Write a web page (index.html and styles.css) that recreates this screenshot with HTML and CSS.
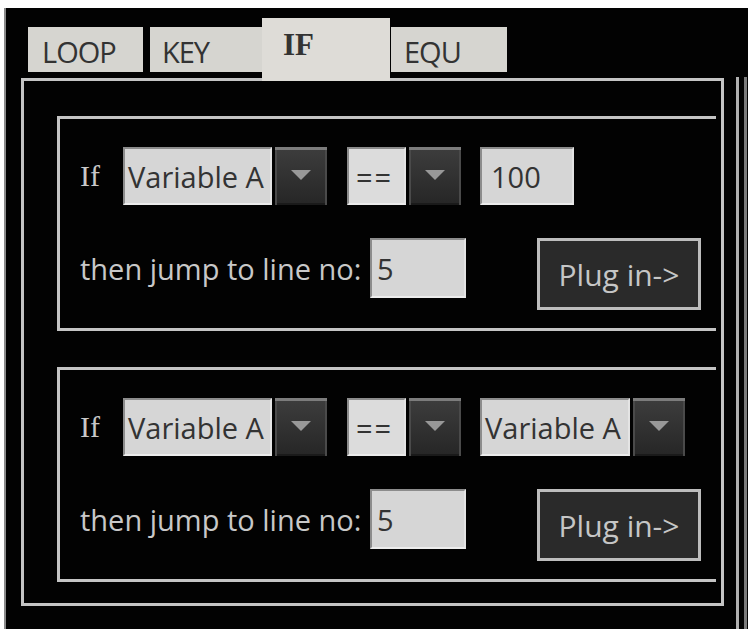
FILE: index.html
```html
<!DOCTYPE html>
<html>
<head>
<meta charset="utf-8">
<title>IF</title>
<link rel="stylesheet" href="styles.css">
</head>
<body>
<div class="window">
  <div class="main">
    <div class="tabs">
      <div class="tab tab-loop">LOOP</div>
      <div class="tab tab-key">KEY</div>
      <div class="tab tab-active">IF</div>
      <div class="tab tab-equ">EQU</div>
    </div>
    <div class="frame">
      <div class="group">
        <div class="row-cond">
          <span class="if">If</span>
          <div class="combo">
            <span class="field f-var">Variable A</span>
            <span class="drop"><span class="tri"></span></span>
          </div>
          <div class="combo combo-op">
            <span class="field f-op">==</span>
            <span class="drop"><span class="tri"></span></span>
          </div>
          <span class="field f-num">100</span>
        </div>
        <div class="row-jump">
          <span class="label">then jump to line no:</span>
          <span class="field f-line">5</span>
          <button class="plug">Plug in-&gt;</button>
        </div>
      </div>
      <div class="group">
        <div class="row-cond">
          <span class="if">If</span>
          <div class="combo">
            <span class="field f-var">Variable A</span>
            <span class="drop"><span class="tri"></span></span>
          </div>
          <div class="combo combo-op">
            <span class="field f-op">==</span>
            <span class="drop"><span class="tri"></span></span>
          </div>
          <div class="combo combo-rhs">
            <span class="field f-var">Variable A</span>
            <span class="drop"><span class="tri"></span></span>
          </div>
        </div>
        <div class="row-jump">
          <span class="label">then jump to line no:</span>
          <span class="field f-line">5</span>
          <button class="plug">Plug in-&gt;</button>
        </div>
      </div>
    </div>
  </div>
  <div class="side"></div>
</div>
</body>
</html>
```

FILE: styles.css
```css
html, body {
  margin: 0;
  padding: 0;
  background: #ffffff;
}

body {
  width: 748px;
  height: 629px;
  overflow: hidden;
  font-family: "Open Sans", "Liberation Sans", sans-serif;
}

.window {
  margin: 8px 0 0 4px;
  height: 621px;
  background: #020202;
  border-left: 2px solid #8a8a8a;
  display: flex;
  box-sizing: border-box;
}

.main {
  margin-left: 15px;
  width: 703px;
  flex: none;
}

/* ---------- tabs ---------- */
.tabs {
  display: flex;
  align-items: flex-start;
  height: 70px;
  padding-left: 7px;
}

.tab {
  margin-top: 19px;
  height: 45px;
  box-sizing: border-box;
  background: #d6d5d0;
  color: #333333;
  font-size: 29px;
  line-height: 32px;
  padding-top: 9px;
  letter-spacing: -1px;
}

.tab-loop {
  width: 115px;
  padding-left: 14px;
  margin-right: 7px;
}

.tab-key {
  width: 112px;
  padding-left: 12px;
}

.tab-active {
  position: relative;
  z-index: 1;
  margin-top: 10px;
  height: 63px;
  width: 128px;
  padding-left: 21px;
  padding-top: 11px;
  background: #dedcd7;
  font-family: "Liberation Serif", serif;
  font-size: 31px;
  font-weight: bold;
  letter-spacing: 0;
  color: #333;
}

.tab-equ {
  margin-left: 1px;
  width: 116px;
  padding-left: 13px;
}

/* ---------- frame ---------- */
.frame {
  height: 528px;
  box-sizing: border-box;
  border: 3px solid #c4c4c4;
  padding: 35px 0 0 33px;
}

.group {
  width: 659px;
  height: 215px;
  box-sizing: border-box;
  border: 3px solid #c4c4c4;
  border-right: none;
  padding: 28px 0 0 20px;
}

.group + .group {
  margin-top: 36px;
}

.row-cond {
  display: flex;
  align-items: center;
  height: 58px;
}

.if {
  width: 43px;
  flex: none;
  font-family: "Liberation Serif", serif;
  font-size: 30px;
  color: #c8c8c8;
}

.combo {
  display: flex;
  gap: 3px;
  height: 58px;
}

.combo-op {
  margin-left: 20px;
}

.combo-rhs {
  margin-left: 19px;
}

.field {
  display: flex;
  align-items: center;
  box-sizing: border-box;
  height: 58px;
  background: #d6d6d6;
  color: #333;
  font-size: 29px;
  border-top: 2px solid #8c8c8c;
  border-left: 2px solid #8c8c8c;
  border-bottom: 2px solid #ececec;
  border-right: 2px solid #e4e4e4;
}

.f-var {
  width: 149px;
  padding-left: 3px;
  white-space: nowrap;
}

.combo-rhs .f-var {
  width: 150px;
}

.f-op {
  width: 59px;
  padding-left: 7px;
  letter-spacing: 2px;
  background: #dcdcdc;
}

.f-num {
  margin-left: 19px;
  width: 94px;
  padding-left: 9px;
}

.drop {
  display: flex;
  align-items: center;
  justify-content: center;
  width: 52px;
  height: 58px;
  box-sizing: border-box;
  background: linear-gradient(#3c3c3c, #262626);
  border-top: 3px solid #7c7c7c;
  box-shadow: inset 2px 0 0 #4a4a4a, inset -2px 0 0 #4a4a4a, inset 0 -2px 0 #1a1a1a;
}

.tri {
  width: 0;
  height: 0;
  margin-top: -6px;
  border-left: 10px solid transparent;
  border-right: 10px solid transparent;
  border-top: 10px solid #989898;
}

/* ---------- second row ---------- */
.row-jump {
  display: flex;
  align-items: flex-start;
  margin-top: 33px;
}

.label {
  display: flex;
  align-items: center;
  width: 290px;
  height: 60px;
  flex: none;
  color: #c8c8c8;
  font-size: 29px;
  white-space: nowrap;
}

.f-line {
  width: 96px;
  height: 60px;
  padding-left: 5px;
}

.plug {
  margin: 0 0 0 71px;
  width: 164px;
  height: 72px;
  box-sizing: border-box;
  background: #2a2a2a;
  border: 3px solid #bdbdbd;
  color: #c6c6c6;
  font-family: "Open Sans", "Liberation Sans", sans-serif;
  font-size: 30px;
  padding: 0;
}

/* ---------- right edge ---------- */
.side {
  flex: none;
  margin: 69px 0 0 12px;
  width: 11px;
  height: 552px;
  box-sizing: border-box;
  border-left: 3px solid #b0b0b0;
  border-right: 3px solid #7a7a7a;
}
```
